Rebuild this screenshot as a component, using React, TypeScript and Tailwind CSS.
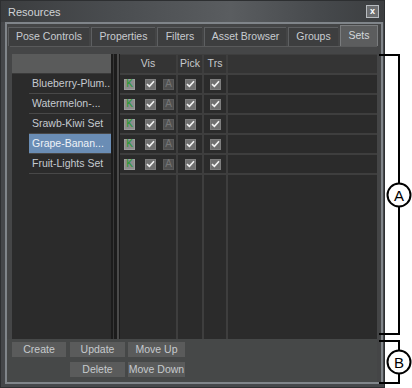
import React from "react";

const sets = [
  { name: "Blueberry-Plum..", selected: false },
  { name: "Watermelon-...", selected: false },
  { name: "Srawb-Kiwi Set", selected: false },
  { name: "Grape-Banan...", selected: true },
  { name: "Fruit-Lights Set", selected: false },
];

const tabs = [
  { label: "Pose Controls", w: "w-[81px]" },
  { label: "Properties", w: "w-[64px]" },
  { label: "Filters", w: "w-[45px]" },
  { label: "Asset Browser", w: "w-[82px]" },
  { label: "Groups", w: "w-[50px]" },
  { label: "Sets", w: "w-[38px]", active: true },
];

const Check = () => (
  <div className="w-[11px] h-[11px] bg-[#6f6f6f] border border-[#7e7e7e] flex items-center justify-center">
    <svg width="9" height="8" viewBox="0 0 9 8">
      <path d="M1 4.2 L3.4 6.4 L8 1.2" stroke="#f2f2f2" strokeWidth="1.6" fill="none" />
    </svg>
  </div>
);

const KBox = () => (
  <div className="w-[11px] h-[11px] bg-[#8c8e8c] border border-[#9c9e9c] flex items-center justify-center text-[10px] leading-none text-[#1e9a30]">
    K
  </div>
);

const ABox = () => (
  <div className="w-[11px] h-[11px] bg-[#4f4f4f] border border-[#5a5a5a] flex items-center justify-center text-[10px] leading-none text-[#757575]">
    A
  </div>
);

const Btn = ({ label, w }: { label: string; w: string }) => (
  <div className={`${w} h-[15px] bg-[#5a5b5b] text-[#c6cacd] flex items-center justify-center`}>{label}</div>
);

export default function App() {
  return (
    <div
      className="relative w-[412px] h-[388px] bg-white overflow-hidden text-[10.5px] text-[#c8ccd0]"
      style={{ fontFamily: '"Liberation Sans", Arial, sans-serif' }}
    >
      <div className="w-[385px] h-[388px] flex flex-col bg-[#45474a] border border-[#2d2f31]">
        {/* title bar */}
        <div className="h-[21px] flex items-center justify-between pl-[7px] pr-[5px] bg-[linear-gradient(90deg,#3b3d3f_0%,#4a4d50_30%,#5a5d60_60%,#45484b_85%,#3c3e40_100%)]">
          <span className="text-[#d0d3d6] text-[11px] pt-[1px]">Resources</span>
          <div className="w-[13px] h-[13px] bg-[#6c6e70] border border-[#b8bcc0] flex items-center justify-center text-white text-[9px] font-bold leading-none">
            x
          </div>
        </div>

        <div className="flex-1 ml-[4px] mr-[1px] mb-[3px] border-2 border-[#80858a] bg-[#444546] flex flex-col">
          {/* tabs */}
          <div className="h-[22px] flex items-end gap-[2px] pl-[1px]">
            {tabs.map((t) =>
              t.active ? (
                <div
                  key={t.label}
                  className={`${t.w} h-[21px] bg-[#5c5d5e] border-t border-l border-r border-[#7a7c7e] text-[#d4d8dc] flex items-center justify-center`}
                >
                  {t.label}
                </div>
              ) : (
                <div
                  key={t.label}
                  className={`${t.w} h-[19px] bg-[#3d3e3f] border-t border-l border-[#5d5f61] flex items-center justify-center`}
                >
                  {t.label}
                </div>
              )
            )}
          </div>

          {/* panel */}
          <div className="flex-1 ml-[3px] mr-[4px] bg-[#454647] border-t border-[#595a5b] flex pt-[7px] pl-[2px]">
            {/* list */}
            <div className="w-[99px] bg-[#2b2b2b] flex flex-col">
              <div className="h-[20px] bg-[#5a5b5b] border-b border-[#3a3a3a]" />
              {sets.map((s) => (
                <div key={s.name} className="h-[20px] pl-[17px]">
                  <div
                    className={`h-[20px] pl-[3px] flex items-center border-b border-[#484848] whitespace-nowrap ${
                      s.selected ? "bg-[#6a8db5] text-[#eef3f8]" : "text-[#c5cad0]"
                    }`}
                  >
                    {s.name}
                  </div>
                </div>
              ))}
            </div>

            {/* splitter */}
            <div className="w-[9px] bg-[#1c1c1c] flex">
              <div className="ml-[2px] w-[1px] bg-[#383838]" />
              <div className="ml-[3px] w-[2px] bg-[#4a4a4a]" />
            </div>

            {/* grid */}
            <div className="flex-1 bg-[#2b2b2b] flex flex-col border-t border-[#3e3e3e]">
              <div className="h-[20px] bg-[#343434] flex border-b-2 border-[#404040] text-[#c6cacd]">
                <div className="w-[58px] flex items-center justify-center border-r-2 border-[#3e3e3e]">Vis</div>
                <div className="w-[26px] flex items-center justify-center border-r-2 border-[#3e3e3e]">Pick</div>
                <div className="w-[24px] flex items-center justify-center border-r-2 border-[#3e3e3e]">Trs</div>
                <div className="flex-1" />
              </div>
              {sets.map((s) => (
                <div key={s.name} className="h-[20px] flex border-b-2 border-[#3e3e3e]">
                  <div className="w-[58px] flex items-center pl-[4px] border-r-2 border-[#3e3e3e]">
                    <KBox />
                    <div className="ml-[10px]">
                      <Check />
                    </div>
                    <div className="ml-[7px]">
                      <ABox />
                    </div>
                  </div>
                  <div className="w-[26px] flex items-center justify-center border-r-2 border-[#3e3e3e]">
                    <Check />
                  </div>
                  <div className="w-[24px] flex items-center justify-center border-r-2 border-[#3e3e3e]">
                    <Check />
                  </div>
                  <div className="flex-1" />
                </div>
              ))}
              <div className="flex-1 flex">
                <div className="w-[58px] border-r-2 border-[#3e3e3e]" />
                <div className="w-[26px] border-r-2 border-[#3e3e3e]" />
                <div className="w-[24px] border-r-2 border-[#3e3e3e]" />
              </div>
            </div>
          </div>

          {/* buttons */}
          <div className="h-[43px] bg-[#464848] mr-[4px] pl-[5px] pt-[3px] flex flex-col gap-[5px]">
            <div className="flex">
              <Btn label="Create" w="w-[54px]" />
              <div className="ml-[4px]">
                <Btn label="Update" w="w-[55px]" />
              </div>
              <div className="ml-[3px]">
                <Btn label="Move Up" w="w-[57px]" />
              </div>
            </div>
            <div className="flex pl-[58px]">
              <Btn label="Delete" w="w-[55px]" />
              <div className="ml-[3px]">
                <Btn label="Move Down" w="w-[57px]" />
              </div>
            </div>
          </div>
        </div>
      </div>

      {/* callouts */}
      <svg className="absolute left-[376px] top-0" width="36" height="388" viewBox="0 0 36 388">
        <path d="M3 55 H23 V334 H3" stroke="#000" strokeWidth="2" fill="none" />
        <circle cx="23" cy="195" r="11.5" fill="#fff" stroke="#000" strokeWidth="2" />
        <text x="23" y="200.5" textAnchor="middle" fontSize="15" fontFamily="Liberation Sans, Arial, sans-serif" fill="#000">
          A
        </text>
        <path d="M3 341 H23 V383 H3" stroke="#000" strokeWidth="2" fill="none" />
        <circle cx="23" cy="362" r="11.5" fill="#fff" stroke="#000" strokeWidth="2" />
        <text x="23" y="367.5" textAnchor="middle" fontSize="15" fontFamily="Liberation Sans, Arial, sans-serif" fill="#000">
          B
        </text>
      </svg>
    </div>
  );
}
